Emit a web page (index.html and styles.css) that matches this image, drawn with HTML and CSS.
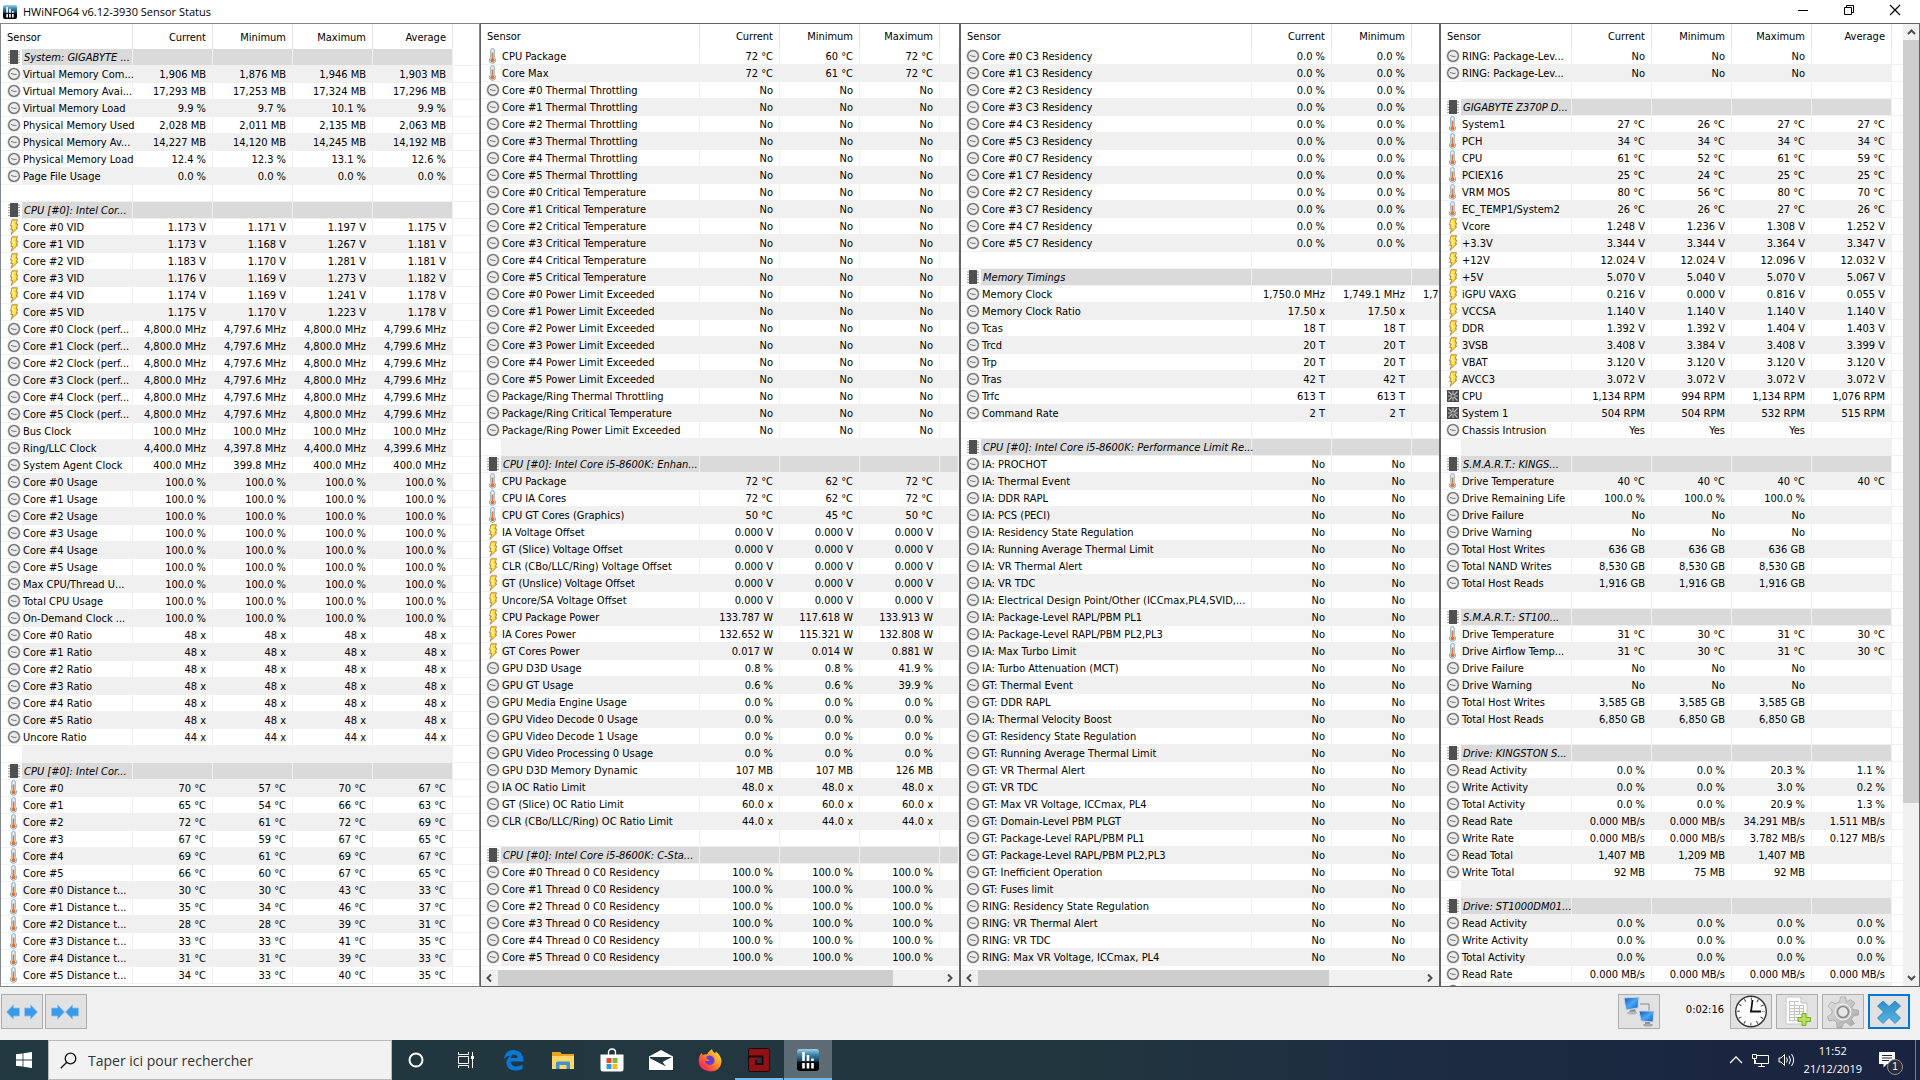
FILE: index.html
```html
<!DOCTYPE html>
<html lang="fr">
<head>
    <meta charset="UTF-8">
    <meta name="viewport" content="width=device-width, initial-scale=1.0">
    <title>HWiNFO64 v6.12-3930 Sensor Status</title>
    <link rel="stylesheet" href="styles.css">
</head>
<body>

<!-- Shared icons -->
<svg class="defs" aria-hidden="true">
    <defs>
        <linearGradient id="gApp" x1="0" y1="0" x2="0" y2="1">
            <stop offset="0" stop-color="#a6d3e6"/>
            <stop offset=".25" stop-color="#3c86ac"/>
            <stop offset=".55" stop-color="#12405c"/>
            <stop offset=".6" stop-color="#0b0f14"/>
            <stop offset="1" stop-color="#000"/>
        </linearGradient>
        <linearGradient id="gBlue" x1="0" y1="0" x2="1" y2="1">
            <stop offset="0" stop-color="#0c54b8"/>
            <stop offset=".5" stop-color="#4ba6f5"/>
            <stop offset="1" stop-color="#0d5ec4"/>
        </linearGradient>
        <linearGradient id="gCross" x1="0" y1="0" x2="0" y2="1">
            <stop offset="0" stop-color="#2f8fcb"/>
            <stop offset="1" stop-color="#55b4e4"/>
        </linearGradient>
        <linearGradient id="gGear" x1="0" y1="0" x2="1" y2="1">
            <stop offset="0" stop-color="#e4e4e4"/>
            <stop offset="1" stop-color="#a5a5a5"/>
        </linearGradient>
        <linearGradient id="gFox" x1="1" y1="0" x2="0" y2="1">
            <stop offset="0" stop-color="#fff04a"/>
            <stop offset=".4" stop-color="#ff9a26"/>
            <stop offset=".75" stop-color="#ff3b4b"/>
            <stop offset="1" stop-color="#e3157f"/>
        </linearGradient>
    </defs>
    <symbol id="clock" viewBox="0 0 14 16">
        <circle cx="7" cy="8" r="6.6" fill="#c4c4c4"/>
        <circle cx="7" cy="8" r="5.3" fill="#ececec" stroke="#6e6e6e" stroke-width="1.2"/>
        <path d="M4 7.4 L7 8.4 H9.6" fill="none" stroke="#6a6a6a" stroke-width=".9"/>
    </symbol>
    <symbol id="bolt" viewBox="0 0 14 16">
        <path d="M5 .8 H10.5 L9 5 H10.8 L9.4 9 H10.8 L4 15.4 L5.8 10.6 H3.8 L5 7 H3.6 Z" fill="#ffe23c" stroke="#b07a3c" stroke-width=".9"/>
        <path d="M6 2 L5 6 H7 L6 9.5" fill="none" stroke="#fff8c0"/>
    </symbol>
    <symbol id="temp" viewBox="0 0 14 16">
        <path d="M4.8 2 Q4.8 .6 6.5 .6 T8.2 2 V9.6 Q9.6 10.8 9.6 12.3 Q9.4 15.3 6.5 15.3 T3.4 12.3 Q3.4 10.8 4.8 9.6 Z" fill="#f3f8fb" stroke="#7ba3bd"/>
        <path d="M6.5 4.5 V12" stroke="#d9783a" stroke-width="1.6"/>
        <circle cx="6.5" cy="12.2" r="2" fill="#e0702a"/>
    </symbol>
    <symbol id="chip" viewBox="0 0 14 16">
        <path d="M1 3 H13 M1 5.6 H13 M1 8.2 H13 M1 10.8 H13 M1 13.4 H13" stroke="#9a9a9a"/>
        <rect x="3" y="1" width="8" height="14" fill="#505050"/>
    </symbol>
    <symbol id="fan" viewBox="0 0 14 16">
        <rect x="1" y="2" width="12" height="12" fill="#484848"/>
        <path d="M2.5 3.5 L11.5 12.5 M11.5 3.5 L2.5 12.5 M7 3 V13 M2 8 H12" stroke="#bdbdbd" stroke-width="1.2"/>
        <circle cx="7" cy="8" r="1.6" fill="#5c5c5c"/>
    </symbol>
    <symbol id="app" viewBox="0 0 22 22">
        <rect width="22" height="22" rx="3" fill="url(#gApp)"/>
        <path d="M6.5 3 V12 M11 6 V12 M15.5 9.5 V12 M6.5 14 V19.5 M11 14 V19.5 M15.5 14 V19.5" stroke="#fff" stroke-width="2.6"/>
    </symbol>
    <symbol id="arrow" viewBox="0 0 14 16">
        <path d="M.5 8 L7.5 .8 V4 H13.5 V12 H7.5 V15.2 Z" fill="#3a9ae8" stroke="#8cc4f0" stroke-width=".8"/>
    </symbol>
</svg>

<div class="window">
    <header class="titlebar">
        <svg class="app-icon"><use href="#app"/></svg>
        <h1>HWiNFO64 v6.12-3930 Sensor Status</h1>
        <div class="controls">
            <button type="button" aria-label="Minimize"><svg width="12" height="12"><path d="M1 6.5 H11" stroke="#000"/></svg></button>
            <button type="button" aria-label="Restore"><svg width="12" height="12" fill="none" stroke="#000"><path d="M1.5 3.5 H8.5 V10.5 H1.5 Z M3.5 3 V1.5 H10.5 V8.5 H9"/></svg></button>
            <button type="button" aria-label="Close"><svg width="12" height="12"><path d="M1 1 L11 11 M11 1 L1 11" stroke="#000" stroke-width="1.2"/></svg></button>
        </div>
    </header>

    <main class="panels">
        <section class="panel panel-first"><div class="list" id="panel0"></div></section>
        <section class="panel">
            <div class="list" id="panel1"></div>
            <div class="hscroll">
                <svg viewBox="0 0 16 16"><path d="M9.5 4.5 L6 8 L9.5 11.5"/></svg>
                <div class="track"><div class="thumb" style="width:89%"></div></div>
                <svg viewBox="0 0 16 16"><path d="M5.5 4.5 L9 8 L5.5 11.5"/></svg>
            </div>
        </section>
        <section class="panel">
            <div class="list" id="panel2"></div>
            <div class="hscroll">
                <svg viewBox="0 0 16 16"><path d="M9.5 4.5 L6 8 L9.5 11.5"/></svg>
                <div class="track"><div class="thumb" style="width:79%"></div></div>
                <svg viewBox="0 0 16 16"><path d="M5.5 4.5 L9 8 L5.5 11.5"/></svg>
            </div>
        </section>
        <section class="panel panel-side">
            <div class="list" id="panel3"></div>
            <div class="vscroll">
                <svg viewBox="0 0 16 16"><path d="M4.5 10 L8 6.5 L11.5 10"/></svg>
                <div class="track"><div class="thumb" style="height:82%"></div></div>
                <svg viewBox="0 0 16 16"><path d="M4.5 6 L8 9.5 L11.5 6"/></svg>
            </div>
        </section>
    </main>

    <footer class="toolbar">
        <div class="tool-pair">
            <button type="button" class="tool" aria-label="Expand columns">
                <svg width="34" height="18"><use href="#arrow" x="1" y="1" width="14" height="16"/><use href="#arrow" x="1" y="1" width="14" height="16" transform="translate(34 0) scale(-1 1)"/></svg>
            </button>
            <button type="button" class="tool" aria-label="Shrink columns">
                <svg width="34" height="18"><use href="#arrow" x="1" y="1" width="14" height="16" transform="translate(17 0) scale(-1 1)"/><use href="#arrow" x="16" y="1" width="14" height="16"/></svg>
            </button>
        </div>
        <span class="spacer"></span>
        <button type="button" class="tool" aria-label="Remote sensors">
            <svg width="34" height="31" viewBox="0 0 34 31">
                <path d="M18 8 H27 V15" fill="none" stroke="#888"/>
                <path d="M2 2 L17 1 L16 12 L4 14 Z" fill="url(#gBlue)" stroke="#c8d4e0"/>
                <path d="M8 14 L13 13 L14 16 L7 17 Z" fill="#8a8f96"/>
                <ellipse cx="10" cy="17" rx="5" ry="1.5" fill="#b4b8bd"/>
                <path d="M17 15 L32 15 L31 26 L19 25 Z" fill="url(#gBlue)" stroke="#c8d4e0"/>
                <path d="M23 26 H28 L28 29 H23 Z" fill="#8a8f96"/>
                <ellipse cx="26" cy="29" rx="5" ry="1.5" fill="#a4a8ad"/>
            </svg>
        </button>
        <span class="elapsed">0:02:16</span>
        <button type="button" class="tool" aria-label="Reset timer">
            <svg width="34" height="33" viewBox="0 0 34 33">
                <circle cx="17" cy="16.5" r="15.3" fill="#fff" stroke="#333" stroke-width="1.4"/>
                <circle cx="17" cy="16.5" r="12.5" fill="none" stroke="#444" stroke-width="3" stroke-dasharray="1 5.545" stroke-dashoffset=".5"/>
                <path d="M17 17 L18.5 5 M16 16.5 H27" stroke="#111" stroke-width="1.8"/>
            </svg>
        </button>
        <button type="button" class="tool" aria-label="Start logging">
            <svg width="30" height="31" viewBox="0 0 30 31">
                <path d="M4 1 H19 L25 7 V28 H4 Z" fill="#fcfcfc" stroke="#c8c8c8"/>
                <path d="M19 1 V7 H25" fill="#e4e4e4" stroke="#c0c0c0"/>
                <path d="M7 5.5 H17 M7 9.5 H22 M7 12.5 H22 M7 15.5 H22 M7 18.5 H22 M7 21.5 H16 M7 24.5 H16 M7.5 5 V25 M12.5 5 V25 M17.5 9 V19 M21.5 9 V19" stroke="#c4c4c4" fill="none"/>
                <path d="M20 17.5 H24 V21.5 H28.5 V25.5 H24 V29.5 H20 V25.5 H16 V21.5 H20 Z" fill="#b6e05a" stroke="#79aa22"/>
            </svg>
        </button>
        <button type="button" class="tool" aria-label="Settings">
            <svg width="34" height="32" viewBox="-17 -16 34 32">
                <path d="M-3.5 -10 L-2.5 -15 H2.5 L3.5 -10 L7.5 -12.5 L12 -9 L9 -4.5 L10 -2.5 L15.5 -2 V3 L10.5 4 L8.5 7 L11.5 11.5 L7.5 14 L3.5 10.5 L.5 11 L-1 15.5 H-6 L-6.500 10 L-9 8 L-14 9 L-15.5 4.5 L-11 1.5 L-11 -2 L-15 -5.5 L-12 -10 L-7.5 -8.5 Z" fill="url(#gGear)" stroke="#999" stroke-width=".6"/>
                <circle r="8" fill="#d0d0d0" stroke="#f2f2f2"/>
                <circle r="5.5" fill="#e6e6e6" stroke="#888" stroke-width="1.6"/>
            </svg>
        </button>
        <button type="button" class="tool tool-focus" aria-label="Close sensors">
            <svg width="26" height="26" viewBox="0 0 26 26">
                <path d="M7 2 L13 7.5 L19 2 L24.5 7 L18.5 13 L24.5 19 L19 24.5 L13 18.5 L7 24.5 L1.5 19 L7.5 13 L1.5 7 Z" fill="url(#gCross)" stroke="#2f7fb4" stroke-width=".8"/>
            </svg>
        </button>
    </footer>
</div>

<nav class="taskbar">
    <button type="button" class="start" aria-label="Démarrer">
        <svg width="16" height="16" fill="#fff"><path d="M0 2.3 L6.6 1.4 V7.6 H0 Z M7.4 1.3 L16 0 V7.6 H7.4 Z M0 8.4 H6.6 V14.6 L0 13.7 Z M7.4 8.4 H16 V16 L7.4 14.7 Z"/></svg>
    </button>
    <label class="search">
        <svg width="17" height="17" fill="none" stroke="#111" stroke-width="1.3"><circle cx="10.5" cy="6.5" r="5.3"/><path d="M6.8 10.2 L.7 16.3"/></svg>
        <input type="search" placeholder="Taper ici pour rechercher" aria-label="Taper ici pour rechercher">
    </label>
    <button type="button" class="task" aria-label="Cortana">
        <svg width="16" height="16"><circle cx="8" cy="8" r="6.5" fill="none" stroke="#fff" stroke-width="2"/></svg>
    </button>
    <button type="button" class="task" aria-label="Task view">
        <svg width="17" height="16" fill="none" stroke="#fff"><path d="M1.5 0 V2.5 H11.5 V0 M1.5 16 V13.5 H11.5 V16 M1.5 4.5 H11.5 V11.5 H1.5 Z M15.5 0 V16"/><path d="M14 4 H17 V7 H14 Z" fill="#fff" stroke="none"/></svg>
    </button>
    <button type="button" class="task" aria-label="Edge">
        <svg width="22" height="22" viewBox="0 0 22 22"><path d="M1 10 Q2 1 11 1 Q20.5 1.5 20.5 12.5 H7.5 Q8 17.5 13 17.5 Q16.5 17.5 19.5 15.8 V20 Q16.5 21.5 12 21.5 Q3.5 21 3.5 13.5 Q3.5 9.5 7.5 6.5 Q3.5 7 1 10 Z M7.6 9 H14.6 Q14.4 5.5 11.3 5.5 Q8.3 5.7 7.6 9 Z" fill="#0a78d6"/></svg>
    </button>
    <button type="button" class="task" aria-label="File explorer">
        <svg width="22" height="19" viewBox="0 0 22 19"><path d="M0 1 H8 L9.5 3 H22 V18 H0 Z" fill="#ffd768"/><path d="M0 1 H8 L9.5 3 H22 V5 H0 Z" fill="#e3a71f"/><path d="M4 18 V12 Q4 10.5 5.5 10.5 H16.5 Q18 10.5 18 12 V18 H14.5 V14 H7.5 V18 Z" fill="#3e92cf"/></svg>
    </button>
    <button type="button" class="task" aria-label="Store">
        <svg width="24" height="24" viewBox="0 0 24 24"><path d="M8.5 7 V4.5 Q8.5 1 12 1 T15.5 4.5 V7" fill="none" stroke="#fff" stroke-width="1.3"/><path d="M.5 6.5 H23.5 V21 Q23.5 23.5 21 23.5 H3 Q.5 23.5 .5 21 Z" fill="#fff"/><path d="M6.5 10 H11.5 V15 H6.5 Z" fill="#e8492f"/><path d="M12.5 10 H17.5 V15 H12.5 Z" fill="#7db72f"/><path d="M6.5 16 H11.5 V21 H6.5 Z" fill="#2a9be0"/><path d="M12.5 16 H17.5 V21 H12.5 Z" fill="#f9b81c"/></svg>
    </button>
    <button type="button" class="task" aria-label="Mail">
        <svg width="24" height="20" viewBox="0 0 24 20"><path d="M0 6.5 L12 0 L24 6.5 V20 H0 Z" fill="#fff"/><path d="M1 7 H23 L13.5 12 L17 16.5 L1 8.3 Z" fill="#22363f"/></svg>
    </button>
    <button type="button" class="task" aria-label="Firefox">
        <svg width="24" height="24" viewBox="0 0 24 24"><path d="M3.5 5 L5 7 Q7 6 9 6.5 Q10.5 3.5 14 1 Q14 3.5 17 5.5 L18 3.5 Q23.5 8 23.5 13.5 Q22.5 23.5 12 23.5 Q.8 22.5 .6 12.5 Q.6 8 3.5 5 Z" fill="url(#gFox)"/><path d="M8.5 8.5 Q13 6 16 10 Q18 15.5 12.5 17 Q7.5 17 6.8 12.5 Q9 14 11.5 12.5 L8.5 10.5 Z" fill="#6b3bd0"/></svg>
    </button>
    <button type="button" class="task task-open" aria-label="OCCT">
        <svg width="22" height="24" viewBox="0 0 22 24"><rect width="22" height="24" rx="3" fill="#200608"/><rect x="1" y="1" width="20" height="22" rx="1" fill="#8e1216"/><path d="M1 8.5 H14.5 V16 H8 V12" fill="none" stroke="#200608" stroke-width="1.8"/><path d="M9 10 H13.500 V15 H9 Z" fill="#22363f"/></svg>
    </button>
    <button type="button" class="task task-open task-active" aria-label="HWiNFO64">
        <svg width="22" height="22"><use href="#app"/></svg>
    </button>
    <span class="spacer"></span>
    <div class="tray">
        <svg width="14" height="8" fill="none" stroke="#fff" stroke-width="1.3"><path d="M1 7 L7 1 L13 7"/></svg>
        <svg width="17" height="15" viewBox="0 0 17 15" fill="none" stroke="#fff"><path d="M5 2.5 H16.5 V10.5 H3.5 V7 M9.5 11 V13.5 M6 13.5 H13 M.5 1.5 H4.5 V5.5 H.5 Z M2.5 6 V11"/></svg>
        <svg width="17" height="14" viewBox="0 0 17 14" fill="none" stroke="#fff"><path d="M1 5 H3 L6.5 1.5 V12.5 L3 9 H1 Z M8.5 4.5 Q10.3 7 8.5 9.5 M11 2.8 Q14 7 11 11.2 M13.5 1 Q17.8 7 13.5 13"/></svg>
        <div class="datetime"><span>11:52</span><span>21/12/2019</span></div>
        <button type="button" class="notif" aria-label="Notifications">
            <svg width="17" height="17" viewBox="0 0 17 17"><path d="M0 0 H16 V12 H8 L4.5 15.5 V12 H0 Z" fill="#fff"/><path d="M3 3.5 H13 M3 6 H13 M3 8.5 H10" stroke="#1a2540"/></svg>
            <span class="badge">1</span>
        </button>
    </div>
</nav>

<script src="sensors.js"></script>
</body>
</html>
```
FILE: styles.css
```css
* {
    box-sizing: border-box;
}

body {
    margin: 0;
    height: 100vh;
    display: flex;
    flex-direction: column;
    overflow: hidden;
    background: #f0f0f0;
    color: #000;
    font-family: "DejaVu Sans Condensed", "DejaVu Sans", sans-serif;
    font-size: 11px;
}

button {
    display: flex;
    align-items: center;
    justify-content: center;
    padding: 0;
    border: none;
    background: none;
}

.defs {
    position: absolute;
    width: 0;
    height: 0;
}

.spacer {
    flex: 1;
}

.window {
    flex: 1;
    min-height: 0;
    display: flex;
    flex-direction: column;
}

/* Title bar */
.titlebar {
    display: flex;
    align-items: center;
    height: 23px;
    padding: 0 2px 0 3px;
    background: #fff;
}

.app-icon {
    width: 14px;
    height: 14px;
    margin-right: 6px;
}

.titlebar h1 {
    flex: 1;
    margin: 0;
    font: 11px "Open Sans", sans-serif;
}

.controls {
    display: flex;
    height: 20px;
    align-self: flex-start;
}

.controls button {
    width: 46px;
}

/* Sensor panels */
.panels {
    flex: 1;
    min-height: 0;
    display: grid;
    grid-template-columns: repeat(4, minmax(0, 1fr));
}

.panel {
    display: flex;
    flex-direction: column;
    min-height: 0;
    border: 1px solid #646464;
    background: #fff;
}

.panel-first {
    border-color: #828790;
}

.panel-side {
    flex-direction: row;
}

.list {
    flex: 1;
    min-width: 0;
    min-height: 0;
    overflow: hidden;
}

table {
    width: 100%;
    table-layout: fixed;
    border-collapse: separate;
    border-spacing: 0;
}

.col-icon {
    width: 20px;
}

.col-value {
    width: 80px;
}

.panel-first .col-icon {
    width: 21px;
}

.name-narrow {
    width: 111px;
}

.name-medium {
    width: 199px;
}

.name-wide {
    width: 271px;
}

th {
    height: 24px;
    padding: 0 6px;
    border-right: 1px solid #e5e5e5;
    font-weight: normal;
    text-align: right;
}

.panel-first th {
    height: 25px;
    padding-top: 1px;
}

th:first-child {
    text-align: left;
}

th:last-child {
    border-right: none;
}

td {
    height: 17px;
    padding: 2px 6px 0 0;
    border-right: 1px solid #f0f0f0;
    border-bottom: 1px solid #f0f0f0;
    line-height: 14px;
    text-align: right;
    white-space: nowrap;
}

td.icon {
    padding: 0;
}

.icon svg {
    display: block;
    width: 14px;
    height: 16px;
    margin-left: 5px;
}

.panel-first .icon svg {
    margin-left: 6px;
}

td.name {
    padding: 2px 0 0 1px;
    text-align: left;
}

.odd td {
    background: #f0f0f0;
}

.group td {
    background: #dadada;
    font-style: italic;
}

.group td.name {
    padding-left: 2px;
}

tr .icon,
tr .rest {
    background: #fff;
    border-right: none;
}

/* Scroll bars */
.hscroll,
.vscroll {
    display: flex;
    background: #f0f0f0;
    flex: none;
}

.hscroll {
    height: 16px;
}

.vscroll {
    flex-direction: column;
    width: 16px;
}

.hscroll svg,
.vscroll svg {
    width: 17px;
    height: 16px;
    fill: none;
    stroke: #505050;
    stroke-width: 2;
}

.track {
    flex: 1;
}

.thumb {
    height: 100%;
    background: #cdcdcd;
}

/* Toolbar */
.toolbar {
    display: flex;
    align-items: center;
    gap: 4px;
    height: 53px;
    padding: 0 10px 4px 1px;
}

.tool-pair {
    display: flex;
    gap: 2px;
}

.tool {
    width: 42px;
    height: 35px;
    border: 1px solid #adadad;
    background: #e1e1e1;
}

.tool-focus {
    border: 2px solid #0078d7;
}

.elapsed {
    margin: 0 2px 4px 22px;
}

/* Taskbar */
.taskbar {
    display: flex;
    height: 40px;
    background: linear-gradient(90deg, #213840, #22363f 55%, #1b2941 80%, #1a2440);
    font-family: "Open Sans", sans-serif;
}

.start {
    width: 48px;
}

.search {
    display: flex;
    align-items: center;
    gap: 11px;
    width: 344px;
    padding: 0 11px;
    border: 1px solid #b8b8b8;
    background: #f2f2f2;
}

.search input {
    flex: 1;
    min-width: 0;
    padding: 0;
    border: none;
    outline: none;
    background: none;
    font: 14px "Open Sans", sans-serif;
}

.search input::placeholder {
    color: #333;
    opacity: 1;
}

.task {
    width: 48px;
    margin-right: 1px;
}

.task-open {
    border-bottom: 2px solid #76b9ed;
    padding-top: 2px;
}

.task-active {
    background: #5d6c74;
}

.tray {
    display: flex;
    align-items: center;
    gap: 9px;
    padding-right: 12px;
    margin-right: 4px;
    border-right: 1px solid #76808f;
    color: #fff;
}

.datetime {
    display: flex;
    flex-direction: column;
    align-items: center;
    font-size: 11px;
    line-height: 18px;
}

.notif {
    position: relative;
    width: 32px;
    height: 40px;
}

.badge {
    position: absolute;
    left: 16px;
    top: 19px;
    width: 16px;
    height: 16px;
    border: 1px solid #8a8f98;
    border-radius: 8px;
    background: #2b2d33;
    color: #fff;
    font-size: 10px;
    line-height: 14px;
}
```
FILE: sensors.js
```js
// One row per line: icon | name | values. "#" starts a group, "-" is an empty row.
const panels = [
    {
        name: 'narrow', heads: ['Current', 'Minimum', 'Maximum', 'Average'], rest: true,
        rows: `
# System: GIGABYTE ...
clock|Virtual Memory Com...|1,906 MB|1,876 MB|1,946 MB|1,903 MB
clock|Virtual Memory Avai...|17,293 MB|17,253 MB|17,324 MB|17,296 MB
clock|Virtual Memory Load|9.9 %|9.7 %|10.1 %|9.9 %
clock|Physical Memory Used|2,028 MB|2,011 MB|2,135 MB|2,063 MB
clock|Physical Memory Av...|14,227 MB|14,120 MB|14,245 MB|14,192 MB
clock|Physical Memory Load|12.4 %|12.3 %|13.1 %|12.6 %
clock|Page File Usage|0.0 %|0.0 %|0.0 %|0.0 %
-
# CPU [#0]: Intel Cor...
bolt|Core #0 VID|1.173 V|1.171 V|1.197 V|1.175 V
bolt|Core #1 VID|1.173 V|1.168 V|1.267 V|1.181 V
bolt|Core #2 VID|1.183 V|1.170 V|1.281 V|1.181 V
bolt|Core #3 VID|1.176 V|1.169 V|1.273 V|1.182 V
bolt|Core #4 VID|1.174 V|1.169 V|1.241 V|1.178 V
bolt|Core #5 VID|1.175 V|1.170 V|1.223 V|1.178 V
${cores('clock', 'Clock (perf...', '4,800.0 MHz|4,797.6 MHz|4,800.0 MHz|4,799.6 MHz')}
clock|Bus Clock|100.0 MHz|100.0 MHz|100.0 MHz|100.0 MHz
clock|Ring/LLC Clock|4,400.0 MHz|4,397.8 MHz|4,400.0 MHz|4,399.6 MHz
clock|System Agent Clock|400.0 MHz|399.8 MHz|400.0 MHz|400.0 MHz
${cores('clock', 'Usage', '100.0 %|100.0 %|100.0 %|100.0 %')}
clock|Max CPU/Thread U...|100.0 %|100.0 %|100.0 %|100.0 %
clock|Total CPU Usage|100.0 %|100.0 %|100.0 %|100.0 %
clock|On-Demand Clock ...|100.0 %|100.0 %|100.0 %|100.0 %
${cores('clock', 'Ratio', '48 x|48 x|48 x|48 x')}
clock|Uncore Ratio|44 x|44 x|44 x|44 x
-
# CPU [#0]: Intel Cor...
temp|Core #0|70 °C|57 °C|70 °C|67 °C
temp|Core #1|65 °C|54 °C|66 °C|63 °C
temp|Core #2|72 °C|61 °C|72 °C|69 °C
temp|Core #3|67 °C|59 °C|67 °C|65 °C
temp|Core #4|69 °C|61 °C|69 °C|67 °C
temp|Core #5|66 °C|60 °C|67 °C|65 °C
temp|Core #0 Distance t...|30 °C|30 °C|43 °C|33 °C
temp|Core #1 Distance t...|35 °C|34 °C|46 °C|37 °C
temp|Core #2 Distance t...|28 °C|28 °C|39 °C|31 °C
temp|Core #3 Distance t...|33 °C|33 °C|41 °C|35 °C
temp|Core #4 Distance t...|31 °C|31 °C|39 °C|33 °C
temp|Core #5 Distance t...|34 °C|33 °C|40 °C|35 °C`
    },
    {
        name: 'medium', heads: ['Current', 'Minimum', 'Maximum'],
        rows: `
temp|CPU Package|72 °C|60 °C|72 °C
temp|Core Max|72 °C|61 °C|72 °C
${cores('clock', 'Thermal Throttling', 'No|No|No')}
${cores('clock', 'Critical Temperature', 'No|No|No')}
${cores('clock', 'Power Limit Exceeded', 'No|No|No')}
clock|Package/Ring Thermal Throttling|No|No|No
clock|Package/Ring Critical Temperature|No|No|No
clock|Package/Ring Power Limit Exceeded|No|No|No
-
# CPU [#0]: Intel Core i5-8600K: Enhan...
temp|CPU Package|72 °C|62 °C|72 °C
temp|CPU IA Cores|72 °C|62 °C|72 °C
temp|CPU GT Cores (Graphics)|50 °C|45 °C|50 °C
bolt|IA Voltage Offset|0.000 V|0.000 V|0.000 V
bolt|GT (Slice) Voltage Offset|0.000 V|0.000 V|0.000 V
bolt|CLR (CBo/LLC/Ring) Voltage Offset|0.000 V|0.000 V|0.000 V
bolt|GT (Unslice) Voltage Offset|0.000 V|0.000 V|0.000 V
bolt|Uncore/SA Voltage Offset|0.000 V|0.000 V|0.000 V
bolt|CPU Package Power|133.787 W|117.618 W|133.913 W
bolt|IA Cores Power|132.652 W|115.321 W|132.808 W
bolt|GT Cores Power|0.017 W|0.014 W|0.881 W
clock|GPU D3D Usage|0.8 %|0.8 %|41.9 %
clock|GPU GT Usage|0.6 %|0.6 %|39.9 %
clock|GPU Media Engine Usage|0.0 %|0.0 %|0.0 %
clock|GPU Video Decode 0 Usage|0.0 %|0.0 %|0.0 %
clock|GPU Video Decode 1 Usage|0.0 %|0.0 %|0.0 %
clock|GPU Video Processing 0 Usage|0.0 %|0.0 %|0.0 %
clock|GPU D3D Memory Dynamic|107 MB|107 MB|126 MB
clock|IA OC Ratio Limit|48.0 x|48.0 x|48.0 x
clock|GT (Slice) OC Ratio Limit|60.0 x|60.0 x|60.0 x
clock|CLR (CBo/LLC/Ring) OC Ratio Limit|44.0 x|44.0 x|44.0 x
-
# CPU [#0]: Intel Core i5-8600K: C-Sta...
${cores('clock', 'Thread 0 C0 Residency', '100.0 %|100.0 %|100.0 %')}`
    },
    {
        name: 'wide', heads: ['Current', 'Minimum', ''],
        rows: `
${cores('clock', 'C3 Residency', '0.0 %|0.0 %')}
${cores('clock', 'C7 Residency', '0.0 %|0.0 %')}
-
# Memory Timings
clock|Memory Clock|1,750.0 MHz|1,749.1 MHz|1,750.0 MHz
clock|Memory Clock Ratio|17.50 x|17.50 x
clock|Tcas|18 T|18 T
clock|Trcd|20 T|20 T
clock|Trp|20 T|20 T
clock|Tras|42 T|42 T
clock|Trfc|613 T|613 T
clock|Command Rate|2 T|2 T
-
# CPU [#0]: Intel Core i5-8600K: Performance Limit Re...
clock|IA: PROCHOT|No|No
clock|IA: Thermal Event|No|No
clock|IA: DDR RAPL|No|No
clock|IA: PCS (PECI)|No|No
clock|IA: Residency State Regulation|No|No
clock|IA: Running Average Thermal Limit|No|No
clock|IA: VR Thermal Alert|No|No
clock|IA: VR TDC|No|No
clock|IA: Electrical Design Point/Other (ICCmax,PL4,SVID,...|No|No
clock|IA: Package-Level RAPL/PBM PL1|No|No
clock|IA: Package-Level RAPL/PBM PL2,PL3|No|No
clock|IA: Max Turbo Limit|No|No
clock|IA: Turbo Attenuation (MCT)|No|No
clock|GT: Thermal Event|No|No
clock|GT: DDR RAPL|No|No
clock|IA: Thermal Velocity Boost|No|No
clock|GT: Residency State Regulation|No|No
clock|GT: Running Average Thermal Limit|No|No
clock|GT: VR Thermal Alert|No|No
clock|GT: VR TDC|No|No
clock|GT: Max VR Voltage, ICCmax, PL4|No|No
clock|GT: Domain-Level PBM PLGT|No|No
clock|GT: Package-Level RAPL/PBM PL1|No|No
clock|GT: Package-Level RAPL/PBM PL2,PL3|No|No
clock|GT: Inefficient Operation|No|No
clock|GT: Fuses limit|No|No
clock|RING: Residency State Regulation|No|No
clock|RING: VR Thermal Alert|No|No
clock|RING: VR TDC|No|No
clock|RING: Max VR Voltage, ICCmax, PL4|No|No`
    },
    {
        name: 'narrow', heads: ['Current', 'Minimum', 'Maximum', 'Average'], rest: true,
        rows: `
clock|RING: Package-Lev...|No|No|No
clock|RING: Package-Lev...|No|No|No
-
# GIGABYTE Z370P D...
temp|System1|27 °C|26 °C|27 °C|27 °C
temp|PCH|34 °C|34 °C|34 °C|34 °C
temp|CPU|61 °C|52 °C|61 °C|59 °C
temp|PCIEX16|25 °C|24 °C|25 °C|25 °C
temp|VRM MOS|80 °C|56 °C|80 °C|70 °C
temp|EC_TEMP1/System2|26 °C|26 °C|27 °C|26 °C
bolt|Vcore|1.248 V|1.236 V|1.308 V|1.252 V
bolt|+3.3V|3.344 V|3.344 V|3.364 V|3.347 V
bolt|+12V|12.024 V|12.024 V|12.096 V|12.032 V
bolt|+5V|5.070 V|5.040 V|5.070 V|5.067 V
bolt|iGPU VAXG|0.216 V|0.000 V|0.816 V|0.055 V
bolt|VCCSA|1.140 V|1.140 V|1.140 V|1.140 V
bolt|DDR|1.392 V|1.392 V|1.404 V|1.403 V
bolt|3VSB|3.408 V|3.384 V|3.408 V|3.399 V
bolt|VBAT|3.120 V|3.120 V|3.120 V|3.120 V
bolt|AVCC3|3.072 V|3.072 V|3.072 V|3.072 V
fan|CPU|1,134 RPM|994 RPM|1,134 RPM|1,076 RPM
fan|System 1|504 RPM|504 RPM|532 RPM|515 RPM
clock|Chassis Intrusion|Yes|Yes|Yes
-
# S.M.A.R.T.: KINGS...
temp|Drive Temperature|40 °C|40 °C|40 °C|40 °C
clock|Drive Remaining Life|100.0 %|100.0 %|100.0 %
clock|Drive Failure|No|No|No
clock|Drive Warning|No|No|No
clock|Total Host Writes|636 GB|636 GB|636 GB
clock|Total NAND Writes|8,530 GB|8,530 GB|8,530 GB
clock|Total Host Reads|1,916 GB|1,916 GB|1,916 GB
-
# S.M.A.R.T.: ST100...
temp|Drive Temperature|31 °C|30 °C|31 °C|30 °C
temp|Drive Airflow Temp...|31 °C|30 °C|31 °C|30 °C
clock|Drive Failure|No|No|No
clock|Drive Warning|No|No|No
clock|Total Host Writes|3,585 GB|3,585 GB|3,585 GB
clock|Total Host Reads|6,850 GB|6,850 GB|6,850 GB
-
# Drive: KINGSTON S...
clock|Read Activity|0.0 %|0.0 %|20.3 %|1.1 %
clock|Write Activity|0.0 %|0.0 %|3.0 %|0.2 %
clock|Total Activity|0.0 %|0.0 %|20.9 %|1.3 %
clock|Read Rate|0.000 MB/s|0.000 MB/s|34.291 MB/s|1.511 MB/s
clock|Write Rate|0.000 MB/s|0.000 MB/s|3.782 MB/s|0.127 MB/s
clock|Read Total|1,407 MB|1,209 MB|1,407 MB
clock|Write Total|92 MB|75 MB|92 MB
-
# Drive: ST1000DM01...
clock|Read Activity|0.0 %|0.0 %|0.0 %|0.0 %
clock|Write Activity|0.0 %|0.0 %|0.0 %|0.0 %
clock|Total Activity|0.0 %|0.0 %|0.0 %|0.0 %
clock|Read Rate|0.000 MB/s|0.000 MB/s|0.000 MB/s|0.000 MB/s
clock|`
    }
];

// Same reading for each of the six cores
function cores(icon, label, values) {
    return [0, 1, 2, 3, 4, 5].map(n => `${icon}|Core #${n} ${label}|${values}`).join('\n');
}

function renderRow(line, index, panel) {
    let cls = index % 2 ? 'odd' : '';
    let icon = '', name = '', values = [];

    if (line.startsWith('# ')) {
        cls = 'group';
        icon = 'chip';
        name = line.slice(2);
    } else if (line !== '-') {
        [icon, name, ...values] = line.split('|');
    }

    const svg = icon ? `<svg><use href="#${icon}"/></svg>` : '';
    const cells = panel.heads.map((h, i) => `<td>${values[i] || ''}</td>`).join('');
    const last = panel.rest ? '<td class="rest"></td>' : panel.name === 'medium' ? '<td></td>' : '';
    return `<tr class="${cls}"><td class="icon">${svg}</td><td class="name">${name}</td>${cells}${last}</tr>`;
}

panels.forEach((panel, n) => {
    const extra = panel.name !== 'wide';
    const rows = panel.rows.trim().split('\n').map((line, i) => renderRow(line, i, panel)).join('');

    document.getElementById('panel' + n).innerHTML = `
        <table>
            <colgroup>
                <col class="col-icon"><col class="name-${panel.name}">
                ${panel.heads.map(() => '<col class="col-value">').join('')}
                ${extra ? '<col>' : ''}
            </colgroup>
            <thead><tr>
                <th colspan="2">Sensor</th>
                ${panel.heads.map(h => `<th>${h}</th>`).join('')}
                ${extra ? '<th></th>' : ''}
            </tr></thead>
            <tbody>${rows}</tbody>
        </table>`;
});
```
